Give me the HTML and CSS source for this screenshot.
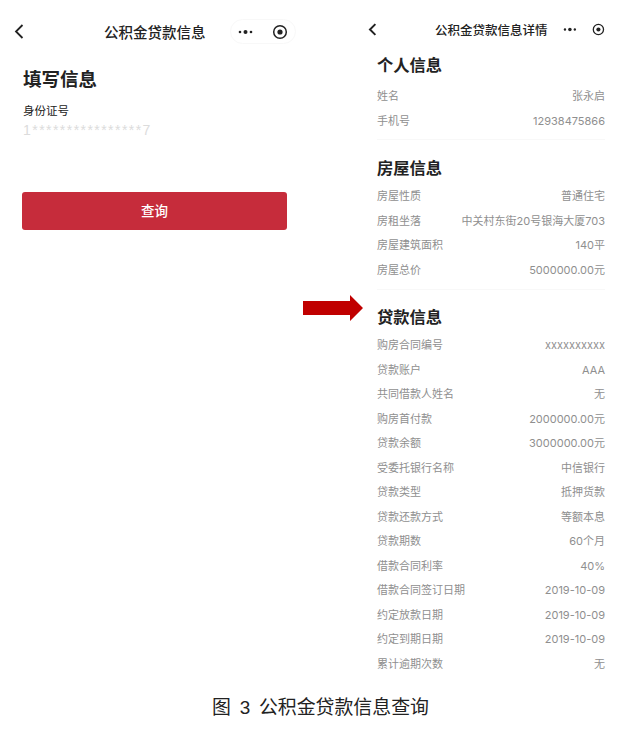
FILE: index.html
```html
<!DOCTYPE html>
<html lang="zh-CN">
<head>
  <meta charset="UTF-8">
  <meta name="viewport" content="width=device-width, initial-scale=1.0">
  <title>公积金贷款信息查询</title>
  <link rel="stylesheet" href="styles.css">
</head>
<body>
  <div class="figure">
    <!-- Query form -->
    <div class="phone-left">
      <div class="nav-left">
        <svg class="back-left" width="10" height="15" viewBox="0 0 10 15"><path d="M8.5 1 L2 7.5 L8.5 14" fill="none" stroke="#222" stroke-width="1.8"/></svg>
        <div class="nav-title-left">公积金贷款信息</div>
        <div class="capsule">
          <svg width="15" height="6" viewBox="0 0 15 6"><circle cx="2" cy="3" r="1.3" fill="#222"/><circle cx="7.5" cy="3" r="2" fill="#222"/><circle cx="13" cy="3" r="1.3" fill="#222"/></svg>
          <svg width="16" height="16" viewBox="0 0 16 16"><circle cx="8" cy="8" r="6.3" fill="none" stroke="#222" stroke-width="1.5"/><circle cx="8" cy="8" r="2.6" fill="#222"/></svg>
        </div>
      </div>
      <h1 class="form-title">填写信息</h1>
      <div class="field-label">身份证号</div>
      <div class="field-value">1****************7</div>
      <div class="query-btn">查询</div>
    </div>

    <div class="arrow-col">
      <svg width="60" height="26" viewBox="0 0 60 26"><path d="M0 6 H47 V0 L60 13 L47 26 V20 H0 Z" fill="#c00000"/></svg>
    </div>

    <!-- Detail page -->
    <div class="phone-right">
      <div class="nav-right">
        <svg class="back-right" width="9" height="13" viewBox="0 0 9 13"><path d="M7.5 1 L2 6.5 L7.5 12" fill="none" stroke="#222" stroke-width="2"/></svg>
        <div class="nav-title-right">公积金贷款信息详情</div>
        <svg class="dots-right" width="14" height="5" viewBox="0 0 14 5"><circle cx="2" cy="2.5" r="1.2" fill="#222"/><circle cx="7" cy="2.5" r="1.8" fill="#222"/><circle cx="12" cy="2.5" r="1.2" fill="#222"/></svg>
        <svg width="13" height="13" viewBox="0 0 13 13"><circle cx="6.5" cy="6.5" r="5.2" fill="none" stroke="#222" stroke-width="1.3"/><circle cx="6.5" cy="6.5" r="2.1" fill="#222"/></svg>
      </div>

      <div class="section section-first">
        <h2>个人信息</h2>
        <div class="row"><span>姓名</span><span>张永启</span></div>
        <div class="row"><span>手机号</span><span>12938475866</span></div>
      </div>

      <div class="section">
        <h2>房屋信息</h2>
        <div class="row"><span>房屋性质</span><span>普通住宅</span></div>
        <div class="row"><span>房租坐落</span><span>中关村东街20号银海大厦703</span></div>
        <div class="row"><span>房屋建筑面积</span><span>140平</span></div>
        <div class="row"><span>房屋总价</span><span>5000000.00元</span></div>
      </div>

      <div class="section section-last">
        <h2>贷款信息</h2>
        <div class="row"><span>购房合同编号</span><span>xxxxxxxxxx</span></div>
        <div class="row"><span>贷款账户</span><span>AAA</span></div>
        <div class="row"><span>共同借款人姓名</span><span>无</span></div>
        <div class="row"><span>购房首付款</span><span>2000000.00元</span></div>
        <div class="row"><span>贷款余额</span><span>3000000.00元</span></div>
        <div class="row"><span>受委托银行名称</span><span>中信银行</span></div>
        <div class="row"><span>贷款类型</span><span>抵押货款</span></div>
        <div class="row"><span>贷款还款方式</span><span>等额本息</span></div>
        <div class="row"><span>贷款期数</span><span>60个月</span></div>
        <div class="row"><span>借款合同利率</span><span>40%</span></div>
        <div class="row"><span>借款合同签订日期</span><span>2019-10-09</span></div>
        <div class="row"><span>约定放款日期</span><span>2019-10-09</span></div>
        <div class="row"><span>约定到期日期</span><span>2019-10-09</span></div>
        <div class="row"><span>累计逾期次数</span><span>无</span></div>
      </div>
    </div>
  </div>

  <div class="caption">图 3 公积金贷款信息查询</div>
</body>
</html>
```

FILE: styles.css
```css
* {
  box-sizing: border-box;
}

body {
  margin: 0;
  width: 640px;
  height: 736px;
  overflow: hidden;
  background: #ffffff;
  color: #222;
  font-family: "Liberation Sans", "Noto Sans CJK SC", sans-serif;
}

.figure {
  display: flex;
  height: 692px;
}

/* Left phone */
.phone-left {
  width: 303px;
  padding: 19px 0 0 22px;
}

.nav-left {
  display: flex;
  align-items: center;
  height: 25px;
}

.back-left {
  margin-left: -8px;
}

.nav-title-left {
  width: 101px;
  margin-left: 80px;
  font-size: 14.5px;
  font-weight: 500;
  white-space: nowrap;
}

.capsule {
  display: flex;
  align-items: center;
  justify-content: space-between;
  width: 66px;
  height: 25px;
  margin-left: 25px;
  padding: 0 7px 0 7px;
  border: 1px solid #f8f8f8;
  border-radius: 13px;
}

.form-title {
  margin: 23px 0 0 1px;
  font-size: 18.5px;
  font-weight: 700;
  line-height: 26px;
}

.field-label {
  margin: 9px 0 0 1px;
  font-size: 11.5px;
  line-height: 18px;
}

.field-value {
  margin: 1px 0 0 1px;
  font-size: 14px;
  letter-spacing: 1.45px;
  line-height: 18px;
  color: #dcdcdc;
}

.query-btn {
  width: 265px;
  height: 38px;
  margin-top: 53px;
  background: #c62c3b;
  border-radius: 3px;
  color: #fff;
  font-size: 13.5px;
  font-weight: 500;
  line-height: 39px;
  text-align: center;
}

/* Arrow between the phones */
.arrow-col {
  width: 60px;
  padding-top: 295px;
}

/* Right phone */
.phone-right {
  width: 228px;
  margin-left: 14px;
  padding-top: 19px;
}

.nav-right {
  display: flex;
  align-items: center;
  height: 20px;
}

.back-right {
  margin-left: -9px;
}

.nav-title-right {
  width: 113px;
  margin-left: 58px;
  font-size: 12.5px;
  font-weight: 500;
  white-space: nowrap;
}

.dots-right {
  margin-left: 16px;
  margin-right: 15px;
}

.section {
  margin-top: 16px;
  padding-bottom: 7px;
  border-bottom: 1px solid #f8f8f8;
}

.section-first {
  margin-top: 14px;
  padding-bottom: 6px;
}

.section-last {
  margin-top: 15px;
  border-bottom: none;
}

.section h2 {
  margin: 0;
  font-size: 16.3px;
  font-weight: 700;
  line-height: 24px;
}

.row {
  display: flex;
  justify-content: space-between;
  height: 24.5px;
  font-family: Inter, "Noto Sans CJK SC", sans-serif;
  font-size: 11px;
  line-height: 24.5px;
  color: #8f8f8f;
}

.section h2 + .row {
  margin-top: 4px;
}

.section-first h2 + .row {
  margin-top: 7px;
}

.caption {
  padding-left: 212px;
  padding-top: 1px;
  font-size: 18.9px;
  line-height: 30px;
  white-space: pre;
  word-spacing: 3.5px;
}
```
